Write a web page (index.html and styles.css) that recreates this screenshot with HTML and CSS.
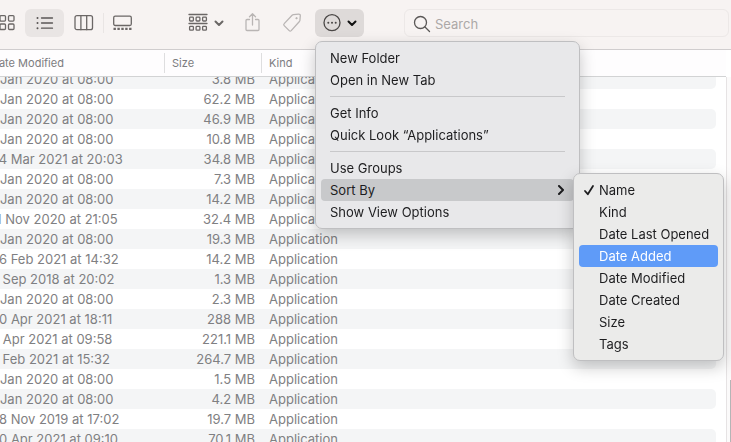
FILE: index.html
```html
<!DOCTYPE html>
<html lang="en">
<head>
    <meta charset="UTF-8" />
    <title>Applications</title>
    <link rel="stylesheet" href="styles.css">
</head>
<body>
<header class="toolbar">
    <div class="view-switch">
        <button class="tool-btn" aria-label="Icon view">
            <svg width="20" height="20" viewBox="0 0 20 20">
                <rect x="4" y="2.600" width="5.500" height="5.500" rx="1"/><rect x="12.500" y="2.600" width="5.500" height="5.500" rx="1"/>
                <rect x="4" y="11" width="5.500" height="5.500" rx="1"/><rect x="12.500" y="11" width="5.500" height="5.500" rx="1"/>
            </svg>
        </button>
        <button class="tool-btn active" aria-label="List view">
            <svg width="20" height="20" viewBox="0 0 20 20">
                <path d="M6.500 5h11M6.500 10h11M6.500 15.200h11"/>
                <path class="dots" d="M2.500 5h.01M2.500 10h.01M2.500 15.200h.01"/>
            </svg>
        </button>
        <button class="tool-btn" aria-label="Column view">
            <svg width="20" height="20" viewBox="0 0 20 20">
                <rect x="1" y="2.700" width="17.500" height="14" rx="2"/><path d="M6.900 2.700v14M12.700 2.700v14"/>
            </svg>
        </button>
        <button class="tool-btn split" aria-label="Gallery view">
            <svg width="20" height="20" viewBox="0 0 20 20">
                <rect x=".7" y="3.200" width="17.600" height="9.300" rx="1.500"/>
                <path class="thumbs" d="M.5 15.800h18"/>
            </svg>
        </button>
    </div>
    <button class="tool-btn group-btn" aria-label="Group items">
        <svg width="20" height="20" viewBox="0 0 20 20">
            <path d="M1 1.500h18M1 10.500h18"/>
            <rect x="1.600" y="4.200" width="3.800" height="3.800" rx=".8"/><rect x="8.100" y="4.200" width="3.800" height="3.800" rx=".8"/><rect x="14.600" y="4.200" width="3.800" height="3.800" rx=".8"/>
            <rect x="1.600" y="13.400" width="3.800" height="3.800" rx=".8"/><rect x="8.100" y="13.400" width="3.800" height="3.800" rx=".8"/><rect x="14.600" y="13.400" width="3.800" height="3.800" rx=".8"/>
        </svg>
        <svg class="chevron" width="10" height="10" viewBox="0 0 10 10"><path d="M1.500 3.500L5 7l3.500-3.500"/></svg>
    </button>
    <button class="tool-btn icon-btn" aria-label="Share" disabled>
        <svg width="20" height="20" viewBox="0 0 20 20">
            <path d="M7.500 6.500H5Q4 6.500 4 7.500v9q0 1 1 1h11q1 0 1-1v-9q0-1-1-1h-2.500M10.500 12V.9M7.500 3.800l3-3 3 3"/>
        </svg>
    </button>
    <button class="tool-btn icon-btn" aria-label="Edit tags" disabled>
        <svg width="20" height="20" viewBox="0 0 20 20">
            <path d="M11.400 1.600l5.200-.5q1.800-.1 1.700 1.600l-.4 4.800q-.1.700-.7 1.300l-8 8.800q-1 1-2 0l-5-5q-1-1 0-2l7.900-8.400q.6-.5 1.300-.6z"/>
            <circle class="hole" cx="14.400" cy="5.200" r=".6"/>
        </svg>
    </button>
    <div class="action">
        <button class="tool-btn action-btn" aria-label="Actions" aria-haspopup="menu" aria-expanded="true">
            <svg width="20" height="20" viewBox="0 0 20 20">
                <circle cx="10" cy="9.700" r="8"/>
                <path class="dots" d="M6.300 9.700h.01M10 9.700h.01M13.700 9.700h.01"/>
            </svg>
            <svg class="chevron" width="10" height="10" viewBox="0 0 10 10"><path d="M1.500 3.500L5 7l3.500-3.500"/></svg>
        </button>
        <div class="menu" role="menu">
            <button class="menu-item" role="menuitem">New Folder</button>
            <button class="menu-item" role="menuitem">Open in New Tab</button>
            <hr>
            <button class="menu-item" role="menuitem">Get Info</button>
            <button class="menu-item" role="menuitem">Quick Look “Applications”</button>
            <hr>
            <button class="menu-item" role="menuitem">Use Groups</button>
            <div class="has-submenu">
                <button class="menu-item open" role="menuitem" aria-haspopup="menu" aria-expanded="true">
                    Sort By
                    <svg class="chevron" width="10" height="10" viewBox="0 0 10 10"><path d="M4 1l4 4-4 4"/></svg>
                </button>
                <div class="menu submenu" role="menu">
                    <button class="menu-item" role="menuitemradio" aria-checked="true">
                        <svg class="check" width="12" height="12" viewBox="0 0 12 12"><path d="M2 7l2.800 3.200 5.200-8.200"/></svg>
                        Name
                    </button>
                    <button class="menu-item" role="menuitemradio" aria-checked="false">Kind</button>
                    <button class="menu-item" role="menuitemradio" aria-checked="false">Date Last Opened</button>
                    <button class="menu-item selected" role="menuitemradio" aria-checked="false">Date Added</button>
                    <button class="menu-item" role="menuitemradio" aria-checked="false">Date Modified</button>
                    <button class="menu-item" role="menuitemradio" aria-checked="false">Date Created</button>
                    <button class="menu-item" role="menuitemradio" aria-checked="false">Size</button>
                    <button class="menu-item" role="menuitemradio" aria-checked="false">Tags</button>
                </div>
            </div>
            <button class="menu-item" role="menuitem">Show View Options</button>
        </div>
    </div>
    <label class="search">
        <svg width="18" height="18" viewBox="0 0 18 18"><circle cx="7.500" cy="7.500" r="6"/><path d="M12 12l4.500 4.500"/></svg>
        <input type="search" placeholder="Search" aria-label="Search">
    </label>
</header>
<main class="pane">
    <div class="file-list" id="fileList">
        <table id="fileTable">
            <thead>
            <tr>
                <th class="date"><span>Date Modified</span></th>
                <th class="size"><span>Size</span></th>
                <th class="kind"><span>Kind</span></th>
            </tr>
            </thead>
            <tbody></tbody>
        </table>
    </div>
    <div class="scrollbar"><div class="thumb"></div></div>
</main>
<script>
    const files = [
        ['1 Jan 2020 at 08:00', '3.8 MB'],
        ['1 Jan 2020 at 08:00', '62.2 MB'],
        ['1 Jan 2020 at 08:00', '46.9 MB'],
        ['1 Jan 2020 at 08:00', '10.8 MB'],
        ['24 Mar 2021 at 20:03', '34.8 MB'],
        ['1 Jan 2020 at 08:00', '7.3 MB'],
        ['1 Jan 2020 at 08:00', '14.2 MB'],
        ['11 Nov 2020 at 21:05', '32.4 MB'],
        ['1 Jan 2020 at 08:00', '19.3 MB'],
        ['26 Feb 2021 at 14:32', '14.2 MB'],
        ['5 Sep 2018 at 20:02', '1.3 MB'],
        ['1 Jan 2020 at 08:00', '2.3 MB'],
        ['30 Apr 2021 at 18:11', '288 MB'],
        ['9 Apr 2021 at 09:58', '221.1 MB'],
        ['5 Feb 2021 at 15:32', '264.7 MB'],
        ['1 Jan 2020 at 08:00', '1.5 MB'],
        ['1 Jan 2020 at 08:00', '4.2 MB'],
        ['28 Nov 2019 at 17:02', '19.7 MB'],
        ['30 Apr 2021 at 09:10', '70.1 MB']
    ];
    const tbody = document.querySelector('#fileTable tbody');
    files.forEach(([date, size]) => {
        const tr = document.createElement('tr');
        tr.innerHTML = `
            <td class="date">${date}</td>
            <td class="size">${size}</td>
            <td class="kind">Application</td>
        `;
        tbody.appendChild(tr);
    });
    // list opens slightly scrolled in both directions
    document.getElementById('fileList').scrollTo(9, 8);
</script>
</body>
</html>
```
FILE: styles.css
```css
* {
    box-sizing: border-box;
}
body {
    margin: 0;
    height: 100vh;
    display: flex;
    flex-direction: column;
    overflow: hidden;
    background: #fff;
    font-family: Inter, 'Liberation Sans', sans-serif;
    font-size: 13px;
}
button {
    font: inherit;
    border: none;
    background: none;
    padding: 0;
}
svg {
    fill: none;
    stroke: currentColor;
    stroke-width: 1.3;
    stroke-linecap: round;
    stroke-linejoin: round;
    flex: none;
}
.toolbar {
    position: relative;
    z-index: 2;
    display: flex;
    align-items: center;
    gap: 6px;
    padding: 9px 2px 12px 0;
    background: #f7f3f2;
    border-bottom: 1px solid #d0cdce;
}
.view-switch {
    display: flex;
    margin-left: -14px;
    margin-right: 36px;
}
.tool-btn {
    display: flex;
    align-items: center;
    justify-content: center;
    width: 39px;
    height: 28px;
    border-radius: 6px;
    color: #6b6766;
}
.tool-btn.active {
    background: #e9e5e4;
    color: #5a5655;
}
.tool-btn.split {
    position: relative;
}
.tool-btn.split::before {
    content: '';
    position: absolute;
    left: 0;
    top: 4px;
    bottom: 4px;
    width: 1px;
    background: #e9e5e4;
}
.dots {
    stroke-width: 2;
}
.thumbs {
    stroke-width: 2.2;
    stroke-dasharray: 2.4 1.5;
    stroke-linecap: butt;
}
.chevron {
    stroke-width: 2;
}
.tool-btn.group-btn {
    justify-content: flex-start;
    width: 45px;
    padding-left: 4px;
    gap: 6px;
}
.tool-btn.icon-btn {
    width: 34px;
    color: #b9b5b4;
}
.hole {
    fill: currentColor;
    stroke-width: 1;
}
.action {
    position: relative;
}
.tool-btn.action-btn {
    width: 49px;
    gap: 5px;
    background: #dedad9;
    color: #4a4746;
}
.action-btn .chevron {
    color: #111;
}
.search {
    flex: 1;
    display: flex;
    align-items: center;
    gap: 4px;
    height: 28px;
    margin-left: 34px;
    padding: 1px 8px 0;
    border: 1px solid #ece8e7;
    border-radius: 6px;
    color: #5a5756;
}
.search input {
    flex: 1;
    min-width: 0;
    padding: 0;
    border: none;
    outline: none;
    background: none;
    font: inherit;
}
.search input::placeholder {
    color: #aca8a7;
}
.menu {
    position: absolute;
    top: 32px;
    left: 0;
    width: 265px;
    padding: 5px;
    background: #e8e8ea;
    border: 1px solid #bfbfc1;
    border-radius: 7px;
    box-shadow: 0 6px 16px rgba(0, 0, 0, 0.22);
    color: #1d1d1f;
}
.menu hr {
    height: 1px;
    margin: 5px 9px;
    border: none;
    background: #c8c8ca;
}
.menu-item {
    display: flex;
    align-items: center;
    justify-content: space-between;
    width: 100%;
    height: 22px;
    padding: 0 9px;
    border-radius: 4px;
    color: inherit;
    text-align: left;
    white-space: nowrap;
}
.menu-item.open {
    background: #c8c9cb;
}
.has-submenu {
    position: relative;
}
.menu.submenu {
    top: -6px;
    left: 252px;
    width: 151px;
    background: #ebebea;
}
.submenu .menu-item {
    justify-content: flex-start;
    padding-left: 20px;
}
.submenu .menu-item[aria-checked="true"] {
    gap: 4px;
    padding-left: 4px;
}
.check {
    stroke-width: 1.8;
}
.menu-item.selected {
    background: #5f9bf8;
    color: #fff;
}
.pane {
    flex: 1;
    min-height: 0;
    display: flex;
}
.file-list {
    flex: 1;
    overflow: auto;
    scrollbar-width: none;
}
table {
    width: calc(100% + 9px);
    table-layout: fixed;
    border-collapse: separate;
    border-spacing: 0;
}
th {
    position: sticky;
    top: 0;
    height: 27px;
    padding: 2px 0;
    background: #fefdfe;
    border-bottom: 1px solid #d2d3d4;
    color: #7c7c7e;
    font-size: 11px;
    font-weight: 400;
    text-align: left;
}
th span {
    display: block;
    line-height: 20px;
}
th.size span, th.kind span {
    padding-left: 7px;
    border-left: 1px solid #dededf;
}
td {
    height: 20px;
    padding: 0;
    line-height: 20px;
    color: #7f8082;
    white-space: nowrap;
}
.date {
    width: 173px;
}
.size {
    width: 97px;
}
td.size {
    padding-right: 6px;
    text-align: right;
}
td.kind {
    padding-left: 8px;
}
tbody tr:nth-child(odd) td {
    background: #f4f5f6;
}
/* the stripe stops short of the scrollbar, with a 5px inner corner */
tbody tr td.kind {
    border-right: 10px solid transparent;
    border-radius: 0 15px 15px 0 / 0 5px 5px 0;
    background-clip: padding-box;
}
.scrollbar {
    display: flex;
    align-items: flex-end;
    justify-content: flex-end;
    width: 5px;
    margin-top: 27px;
    border-left: 1px solid #e6e3e4;
    background: #fbfafa;
}
.thumb {
    width: 1px;
    height: 17%;
    background: #b5b5b6;
}
```
